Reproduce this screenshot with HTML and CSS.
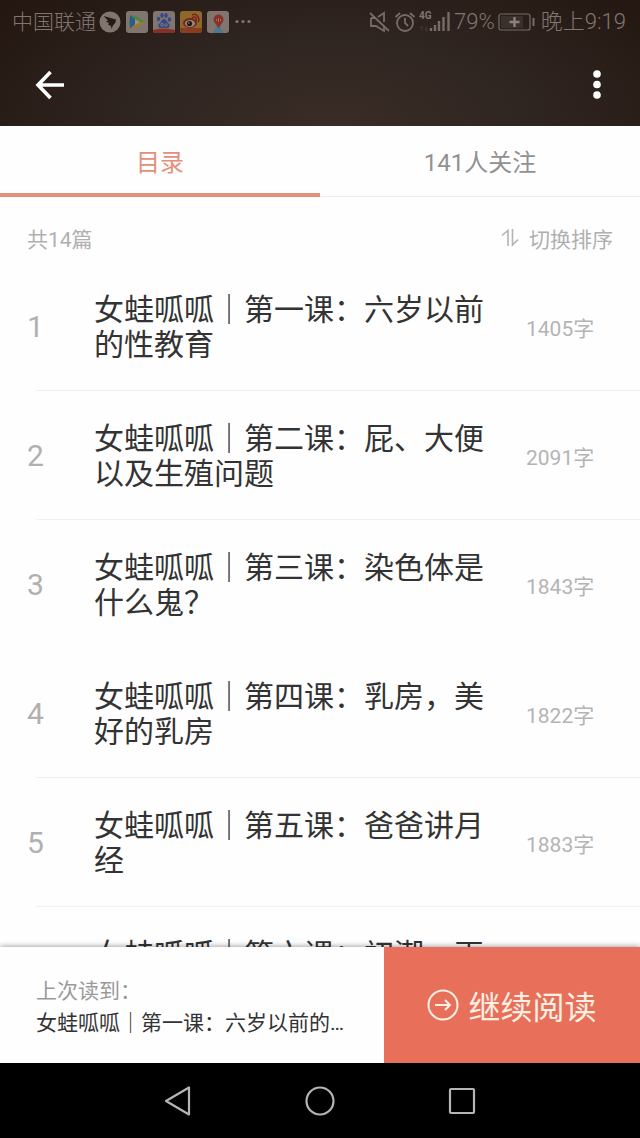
FILE: index.html
```html
<!DOCTYPE html>
<html lang="zh-CN">
<head>
<meta charset="utf-8">
<meta name="viewport" content="width=device-width, initial-scale=1">
<title>目录</title>
<link rel="stylesheet" href="styles.css">
</head>
<body>
<div class="screen">
  <header class="hero">
    <div class="status">
      <div class="status-group">
        <span class="carrier">中国联通</span>
        <div class="notices">
          <svg width="22" height="22" viewBox="0 0 22 22"><circle cx="11" cy="11" r="10.5" fill="#81766f"/><path d="M4.500 5 17 8.500 16.500 11.500 14 14.500 12.500 18 12 15 9 13.500 10 12 7 10.500 9 9.500Z" fill="#241c19"/></svg>
          <svg width="22" height="22" viewBox="0 0 22 22"><rect width="22" height="22" rx="3" fill="#81766f"/><path d="M4 4Q3 11 4 18L11 14 9 7Z" fill="#2a5f82"/><path d="M4 4Q11 4 19 11L13 12 8 7Z" fill="#4f8546"/><path d="M4 18Q12 17 19 11L12 11 8 14Z" fill="#987b2c"/><path d="M9 8 14 11 9 14Z" fill="#9a9189"/></svg>
          <svg width="22" height="22" viewBox="0 0 22 22"><rect width="22" height="22" rx="3" fill="#81766f"/><path d="M0 19Q11 16 22 19Q22 22 19 22H3Q0 22 0 19Z" fill="#872f22"/><g fill="#354989"><ellipse cx="5.500" cy="8" rx="1.700" ry="2.300"/><ellipse cx="9" cy="4.500" rx="1.700" ry="2.400"/><ellipse cx="13" cy="4.500" rx="1.700" ry="2.400"/><ellipse cx="16.500" cy="8.500" rx="1.700" ry="2.300"/><path d="M11 8Q13 8 15 12 18 14 16 16.500 14 17.500 11 16.500 8 17.500 6 16.500 4 14 7 12 9 8 11 8Z"/></g><path d="M8 12.500H10V15H8ZM12 12.500V15H14V12.500" fill="none" stroke="#81766f"/></svg>
          <svg width="22" height="22" viewBox="0 0 22 22"><rect width="22" height="22" rx="3" fill="#8d682b"/><path d="M0 17H22V19Q22 22 19 22H3Q0 22 0 19Z" fill="#883c20"/><ellipse cx="10" cy="12" rx="7" ry="5" fill="#7d241d"/><ellipse cx="10" cy="12.500" rx="5" ry="3.500" fill="#93887d"/><circle cx="9.500" cy="12.500" r="2.600" fill="#1f1918"/><circle cx="8.800" cy="12" r=".8" fill="#93887d"/><path d="M12 7Q14 5 16 7 17 9 16 11M12 4Q16 2 18 6 20 9 18 11" fill="none" stroke="#7d241d" stroke-width="1.500"/></svg>
          <svg width="22" height="22" viewBox="0 0 22 22"><rect width="22" height="22" rx="3" fill="#81766f"/><path d="M6 22 10 15H13L16 22Z" fill="#4d7690"/><path d="M11.500 17 8 12A5 5 0 1 1 15 12Z" fill="#8b3029"/><path d="M9.500 8V10M11.500 7V11M13.500 8V10" stroke="#81766f"/></svg>
          <svg width="22" height="22" viewBox="0 0 22 22" fill="#81766f"><circle cx="3" cy="10.500" r="1.600"/><circle cx="9" cy="10.500" r="1.600"/><circle cx="15" cy="10.500" r="1.600"/></svg>
        </div>
      </div>
      <div class="status-group status-right">
        <svg width="22" height="22" viewBox="0 0 22 22" fill="none" stroke="#776c66" stroke-width="1.800"><path d="M2 7V15H7L15 20V15M2 7H6M9 6 15 2V11M1 2 20 20"/></svg>
        <svg width="22" height="22" viewBox="0 0 22 22" fill="none" stroke="#776c66" stroke-width="1.800"><circle cx="11" cy="12" r="8"/><path d="M11 7V12L14 15M1.500 6 6 2M16 2 20.500 6"/></svg>
        <div class="signal">
          <span class="network">4G</span>
          <svg width="32" height="22" viewBox="0 0 32 22"><path d="M3 15V20M1.500 17 3 15 M7 15V20M7 20 8.500 18" stroke="#453b37" fill="none"/><path d="M12 17V20M16 14V20M20 10V20M24.500 6V20M29.500 1V20" stroke="#776c66" stroke-width="2.400"/></svg>
        </div>
        <span class="percent">79%</span>
        <svg width="38" height="18" viewBox="0 0 38 18"><rect x="1" y="1" width="31" height="16" rx="2" fill="none" stroke="#776c66" stroke-width="1.200"/><rect x="3" y="3" width="22" height="12" fill="#3a302d"/><path d="M16.500 4V14M11.500 9H21.500" stroke="#8c827c" stroke-width="2.400"/><path d="M35.500 5V13" stroke="#776c66" stroke-width="2"/></svg>
        <span class="clock">晚上9:19</span>
      </div>
    </div>
    <div class="appbar">
      <button class="icon-button" type="button" aria-label="返回"><svg width="32" height="32" viewBox="0 0 32 32" fill="none" stroke="#fff" stroke-width="3.600"><path d="M16.500 3 4 16 16.500 29M4 16H30"/></svg></button>
      <button class="icon-button" type="button" aria-label="更多"><svg width="32" height="32" viewBox="0 0 32 32" fill="#fff"><circle cx="16" cy="5" r="3.800"/><circle cx="16" cy="15.500" r="3.800"/><circle cx="16" cy="26" r="3.800"/></svg></button>
    </div>
  </header>

  <nav class="tabs">
    <button class="tab tab-active" type="button">目录</button>
    <button class="tab" type="button">141人关注</button>
  </nav>

  <main class="content">
    <div class="toolbar">
      <span>共14篇</span>
      <button class="sort" type="button"><svg width="20" height="20" viewBox="0 0 20 20" fill="none" stroke="#b4b4b4" stroke-width="1.600"><path d="M1 7.500 7 2.500V18M11.500 1V17L17 11.500"/></svg>切换排序</button>
    </div>
    <ol class="chapters">
      <li class="chapter"><span class="number">1</span><a class="title" href="#c1">女蛙呱呱｜第一课：六岁以前的性教育</a><span class="count">1405字</span></li>
      <li class="chapter"><span class="number">2</span><a class="title" href="#c2">女蛙呱呱｜第二课：屁、大便以及生殖问题</a><span class="count">2091字</span></li>
      <li class="chapter chapter-plain"><span class="number">3</span><a class="title" href="#c3">女蛙呱呱｜第三课：染色体是什么鬼？</a><span class="count">1843字</span></li>
      <li class="chapter"><span class="number">4</span><a class="title" href="#c4">女蛙呱呱｜第四课：乳房，美好的乳房</a><span class="count">1822字</span></li>
      <li class="chapter"><span class="number">5</span><a class="title" href="#c5">女蛙呱呱｜第五课：爸爸讲月经</a><span class="count">1883字</span></li>
      <li class="chapter"><span class="number"></span><a class="title" href="#c6">女蛙呱呱｜第六课：初潮，再</a><span class="count"></span></li>
    </ol>
  </main>

  <footer class="resume">
    <div class="last-read">
      <span class="last-label">上次读到：</span>
      <span class="last-title">女蛙呱呱｜第一课：六岁以前的性教育</span>
    </div>
    <button class="continue" type="button"><svg width="32" height="32" viewBox="0 0 32 32" fill="none" stroke="#fff0e4" stroke-width="2"><circle cx="16" cy="16" r="14.500"/><path d="M8 16H23M18 11 23 16 18 21"/></svg>继续阅读</button>
  </footer>

  <nav class="system">
    <button class="icon-button" type="button" aria-label="后退"><svg width="32" height="32" viewBox="0 0 32 32" fill="none" stroke="#b5b5b5" stroke-width="2.200" stroke-linejoin="round"><path d="M27 2.500V29.500L4 16Z"/></svg></button>
    <button class="icon-button" type="button" aria-label="主屏幕"><svg width="32" height="32" viewBox="0 0 32 32" fill="none" stroke="#b5b5b5" stroke-width="2.200"><circle cx="16" cy="16" r="13.500"/></svg></button>
    <button class="icon-button" type="button" aria-label="最近任务"><svg width="32" height="32" viewBox="0 0 32 32" fill="none" stroke="#b5b5b5" stroke-width="2.200"><rect x="4" y="4" width="24" height="24" rx="1"/></svg></button>
  </nav>
</div>
</body>
</html>
```
FILE: styles.css
```css
* { box-sizing: border-box; }

body {
  margin: 0;
  font-family: Roboto, "Noto Sans CJK SC", sans-serif;
  font-weight: 400;
  color: #333;
  background: #fefefe;
}

button {
  padding: 0;
  border: 0;
  background: none;
  font: inherit;
  color: inherit;
}

svg { display: block; flex: none; }

.screen {
  display: flex;
  flex-direction: column;
  height: 100vh;
}

.hero {
  flex: none;
  background: radial-gradient(ellipse 64% 150% at 52% 100%, #3a2c26 0%, #302621 45%, #241712 100%);
}

.status {
  display: flex;
  align-items: center;
  justify-content: space-between;
  height: 44px;
  padding: 0 14px 0 12px;
  font-size: 21px;
  font-weight: 300;
  line-height: 28px;
  color: #81766f;
  white-space: nowrap;
}

.status-group { display: flex; align-items: center; gap: 3px; }
.status-right { gap: 3px; }
.notices { display: flex; gap: 5px; }
.signal { display: flex; position: relative; }
.network {
  position: absolute;
  top: 0;
  left: 0;
  font-size: 10px;
  font-weight: 700;
  line-height: 10px;
}
.percent { font-size: 22px; }
.clock { margin-left: 2px; font-size: 22px; }

.appbar {
  display: flex;
  align-items: center;
  justify-content: space-between;
  height: 82px;
  padding: 0 27px 0 34px;
}

.tabs {
  display: flex;
  flex: none;
  height: 71px;
  border-bottom: 1px solid #ebebeb;
}

.tab {
  flex: 1;
  margin-bottom: -1px;
  padding-top: 2px;
  border-bottom: 4px solid transparent;
  font-size: 24px;
  color: #919191;
}
.tab-active { border-color: #e2917f; color: #e68e7c; }

.content { flex: 1; min-height: 0; overflow: hidden; }

.toolbar {
  display: flex;
  align-items: center;
  justify-content: space-between;
  height: 65px;
  padding: 17px 27px 0;
  font-size: 21px;
  color: #b0b0b0;
}
.sort { display: flex; align-items: center; gap: 8px; }

.chapters { margin: 0; padding: 0; list-style: none; }

.chapter {
  display: grid;
  grid-template-columns: 34px 1fr 68px;
  align-items: center;
  column-gap: 33px;
  height: 129px;
  padding: 0 46px 0 27px;
  background: linear-gradient(#f1f1f1, #f1f1f1) 36px 100% / 100% 1px no-repeat;
}
.chapter-plain { background: none; }

.number { font-size: 30px; color: #b0b0b0; }
.title {
  min-height: 70px;
  font-size: 30px;
  line-height: 35px;
  color: #333;
  text-decoration: none;
}
.count { font-size: 21px; color: #b4b4b4; white-space: nowrap; }

.resume {
  display: flex;
  flex: none;
  position: relative;
  height: 116px;
  background: #fefefe;
  box-shadow: 0 -1px 5px rgba(0, 0, 0, .35);
}

.last-read {
  display: flex;
  flex-direction: column;
  justify-content: center;
  width: 60%;
  padding: 4px 35px 0 36px;
  font-size: 21px;
  line-height: 32px;
}
.last-label { color: #999; }
.last-title { overflow: hidden; text-overflow: ellipsis; white-space: nowrap; }

.continue {
  display: flex;
  align-items: center;
  justify-content: center;
  gap: 9px;
  width: 40%;
  background: #e8705b;
  font-size: 32px;
  color: #fff0e4;
}

.system {
  display: flex;
  flex: none;
  align-items: center;
  justify-content: center;
  gap: 110px;
  height: 75px;
  background: #000;
}
```
